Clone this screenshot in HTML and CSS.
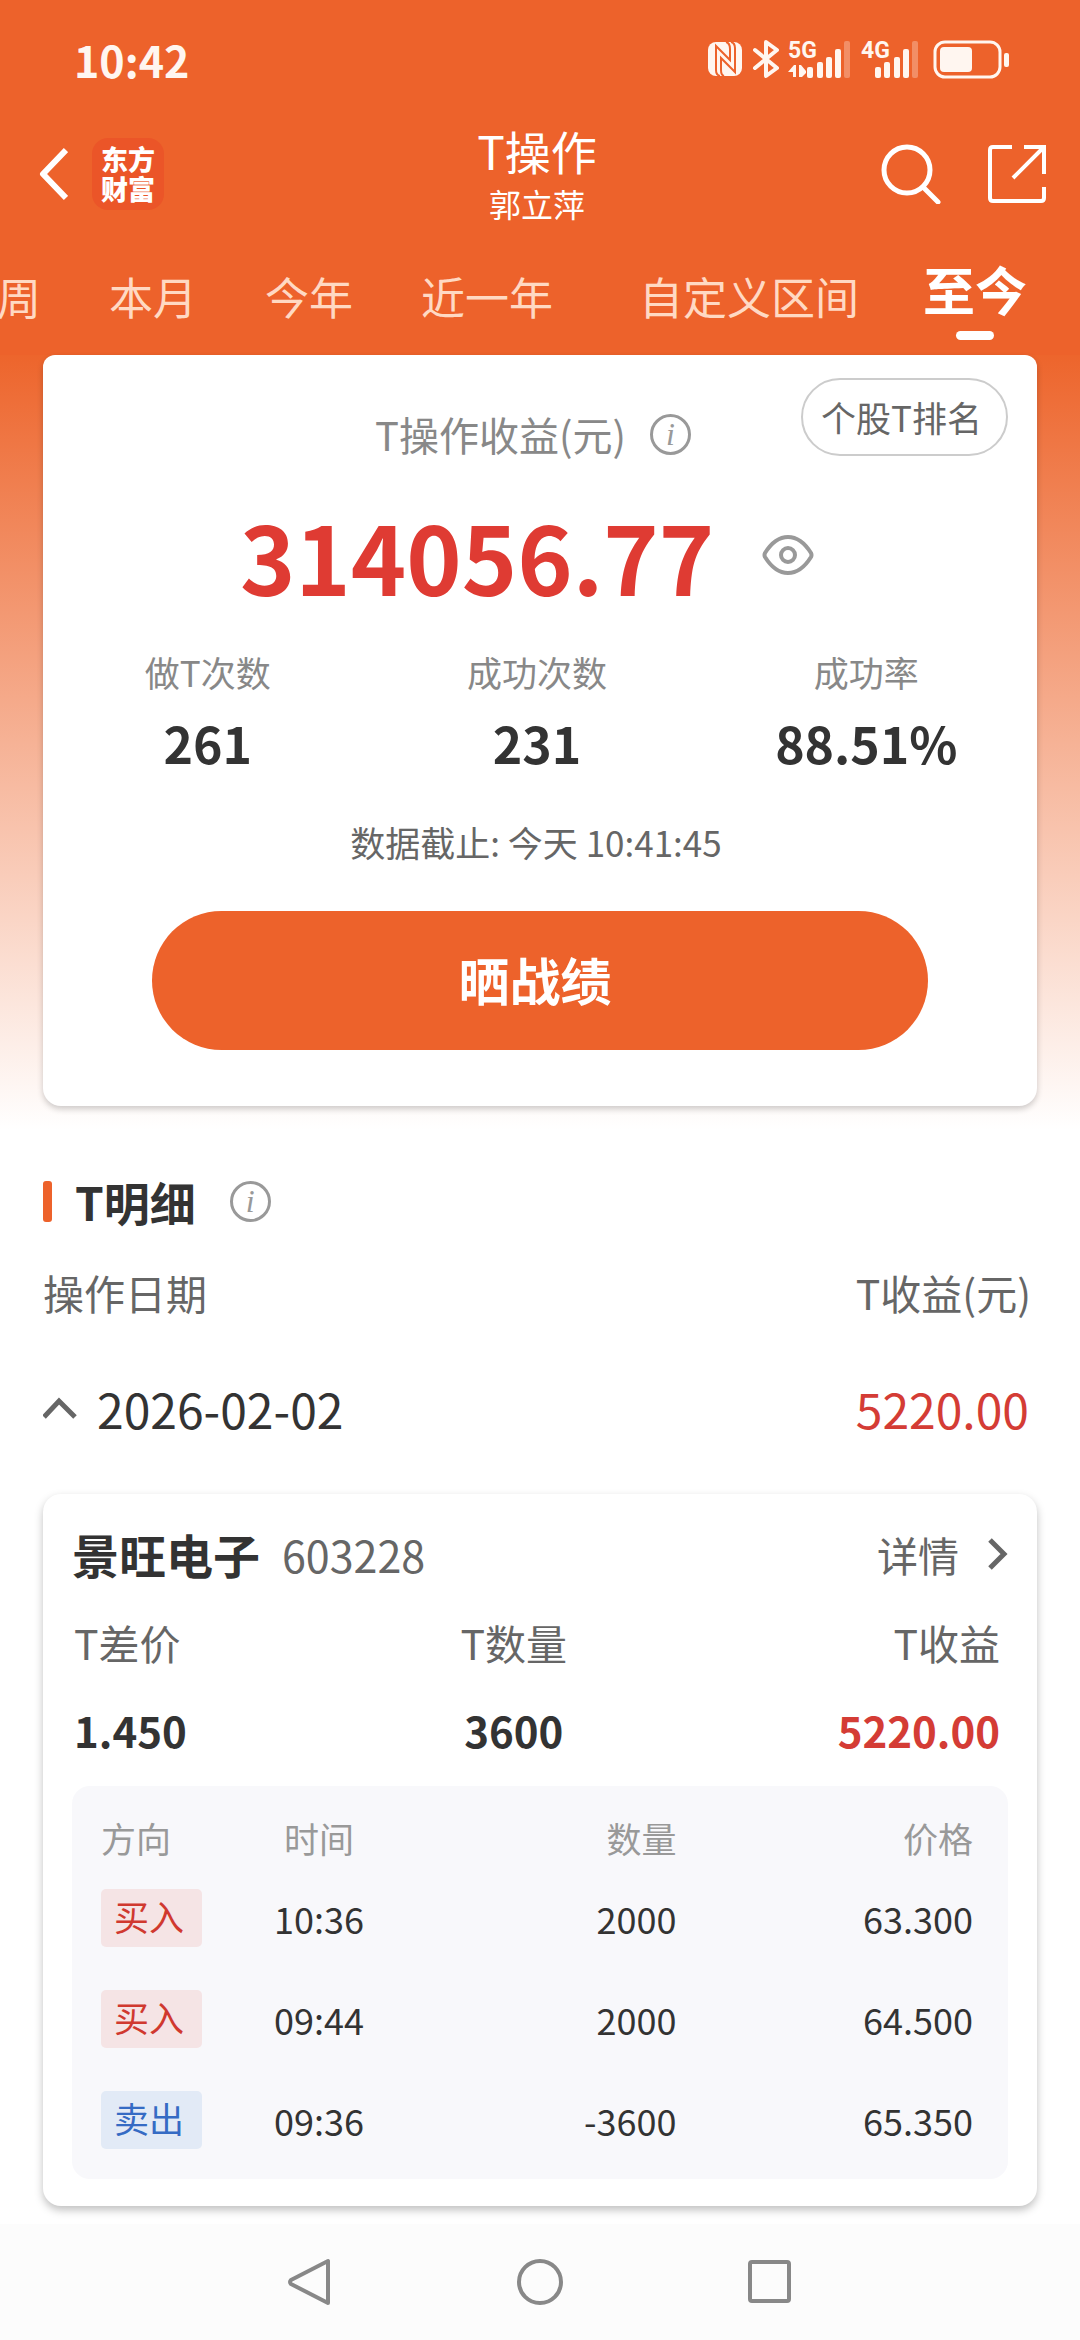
FILE: index.html
```html
<!DOCTYPE html>
<html lang="zh-CN">
<head>
    <meta charset="UTF-8">
    <meta name="viewport" content="width=device-width, initial-scale=1.0">
    <title>T操作</title>
    <link rel="stylesheet" href="styles.css">
</head>
<body>
    <header class="header">
        <div class="status-bar">
            <span class="status-time">10:42</span>
            <svg class="status-icons" width="302" height="56" viewBox="0 -8 302 56" fill="#fff6f0">
                <!-- NFC -->
                <rect x="0" y="3" width="34" height="34" rx="8"/>
                <path d="M12 37Q8 36 8 31V7L22 21V10Q22 4 18 3M23 3Q27 4 27 9V33L13 19V31Q13 36 16 37" fill="none" stroke="#ed622b" stroke-width="2"/>
                <!-- Bluetooth -->
                <path d="M47 11L69 29L58 37V3L69 11L47 29" fill="none" stroke="#fff6f0" stroke-width="4" stroke-linejoin="round" stroke-linecap="round"/>
                <!-- 5G -->
                <text class="network" x="80" y="19">5G</text>
                <path d="M80 33L86 26H88V38H85V33ZM91 26H93L98 32V34L94 38H91Z"/>
                <rect x="99" y="28" width="6" height="11" rx="2"/>
                <rect x="109" y="23" width="6" height="16" rx="2"/>
                <rect x="118" y="18" width="6" height="21" rx="2"/>
                <rect x="127" y="10" width="6" height="29" rx="2"/>
                <rect x="136" y="2" width="6" height="37" rx="2" opacity="0.3"/>
                <!-- 4G -->
                <text class="network" x="153" y="19">4G</text>
                <rect x="167" y="28" width="6" height="11" rx="2"/>
                <rect x="176" y="23" width="6" height="16" rx="2"/>
                <rect x="186" y="18" width="6" height="21" rx="2"/>
                <rect x="195" y="10" width="6" height="29" rx="2"/>
                <rect x="204" y="2" width="6" height="37" rx="2" opacity="0.3"/>
                <!-- Батарея -->
                <rect x="227" y="3" width="65" height="35" rx="10" fill="none" stroke="#fff6f0" stroke-width="3"/>
                <rect x="232" y="8" width="32" height="25" rx="4"/>
                <rect x="296" y="14" width="5" height="14" rx="2"/>
            </svg>
        </div>

        <div class="title-bar">
            <div class="title-left">
                <button type="button" class="icon-button" aria-label="返回">
                    <svg width="30" height="54" viewBox="0 0 30 54" fill="none" stroke="#fff" stroke-width="6"><path d="M28 3L5 27L28 51" stroke-linejoin="round"/></svg>
                </button>
                <a href="#" class="logo">东方<br>财富</a>
            </div>
            <div class="title-center">
                <h1>T操作</h1>
                <p>郭立萍</p>
            </div>
            <div class="title-right">
                <button type="button" class="icon-button" aria-label="搜索">
                    <svg width="60" height="60" viewBox="0 0 60 60" fill="none" stroke="#fff" stroke-width="5" stroke-linecap="round"><circle cx="26" cy="26" r="23"/><path d="M42 43L57 58"/></svg>
                </button>
                <button type="button" class="icon-button" aria-label="分享">
                    <svg width="58" height="60" viewBox="0 0 58 60" fill="none" stroke="#fff" stroke-width="4"><path d="M24 3H5Q2 3 2 6V54Q2 57 5 57H53Q56 57 56 54V43M36 3H56V30M55 4L25 34"/></svg>
                </button>
            </div>
        </div>

        <nav class="tabs">
            <a href="#" class="tab">本周</a>
            <a href="#" class="tab">本月</a>
            <a href="#" class="tab">今年</a>
            <a href="#" class="tab">近一年</a>
            <a href="#" class="tab tab-range">自定义区间</a>
            <a href="#" class="tab active">至今</a>
        </nav>
    </header>

    <main>
        <section class="summary">
            <div class="summary-card">
                <button type="button" class="rank-button">个股T排名</button>
                <div class="summary-title">
                    <span>T操作收益(元)</span>
                    <button type="button" class="info-button" aria-label="说明">i</button>
                </div>
                <div class="summary-total">
                    <strong>314056.77</strong>
                    <button type="button" class="icon-button" aria-label="隐藏金额">
                        <svg width="52" height="40" viewBox="0 0 52 40" fill="none" stroke="#999" stroke-width="4"><path d="M3 18Q13 2 26 2T49 18Q50 20 49 22Q39 38 26 38T3 22Q2 20 3 18Z"/><circle cx="26" cy="20" r="7"/></svg>
                    </button>
                </div>
                <div class="stats">
                    <div class="stat"><span>做T次数</span><strong>261</strong></div>
                    <div class="stat"><span>成功次数</span><strong>231</strong></div>
                    <div class="stat"><span>成功率</span><strong>88.51%</strong></div>
                </div>
                <p class="updated">数据截止: 今天 10:41:45</p>
                <button type="button" class="share-button">晒战绩</button>
            </div>
        </section>

        <section class="details">
            <div class="details-title">
                <h2>T明细</h2>
                <button type="button" class="info-button" aria-label="说明">i</button>
            </div>
            <div class="details-head">
                <span>操作日期</span>
                <span>T收益(元)</span>
            </div>
            <button type="button" class="day-row">
                <svg width="36" height="24" viewBox="0 0 36 24" fill="none" stroke="#666" stroke-width="5"><path d="M1 21L16 5L32 21"/></svg>
                <span class="day-date">2026-02-02</span>
                <span class="day-profit">5220.00</span>
            </button>

            <article class="stock-card">
                <div class="stock-head">
                    <h3>景旺电子</h3>
                    <span class="stock-code">603228</span>
                    <a href="#" class="stock-link">详情
                        <svg width="20" height="32" viewBox="0 0 20 32" fill="none" stroke="#666" stroke-width="5"><path d="M2 2L16 16L2 30"/></svg>
                    </a>
                </div>
                <div class="stock-values">
                    <div><span>T差价</span><strong>1.450</strong></div>
                    <div><span>T数量</span><strong>3600</strong></div>
                    <div><span>T收益</span><strong class="red">5220.00</strong></div>
                </div>
                <div class="trades">
                    <table>
                        <thead>
                            <tr><th>方向</th><th>时间</th><th>数量</th><th>价格</th></tr>
                        </thead>
                        <tbody>
                            <tr><td><span class="badge buy">买入</span></td><td>10:36</td><td>2000</td><td>63.300</td></tr>
                            <tr><td><span class="badge buy">买入</span></td><td>09:44</td><td>2000</td><td>64.500</td></tr>
                            <tr><td><span class="badge sell">卖出</span></td><td>09:36</td><td>-3600</td><td>65.350</td></tr>
                        </tbody>
                    </table>
                </div>
            </article>
        </section>
    </main>

    <footer class="system-nav">
        <button type="button" class="icon-button" aria-label="后退">
            <svg width="48" height="48" viewBox="0 0 48 48" fill="none" stroke="#888" stroke-width="4" stroke-linejoin="round"><path d="M42 3V45L5 26Q3 24 5 22Z"/></svg>
        </button>
        <button type="button" class="icon-button" aria-label="主页">
            <svg width="48" height="48" viewBox="0 0 48 48" fill="none" stroke="#888" stroke-width="4"><circle cx="24" cy="24" r="21"/></svg>
        </button>
        <button type="button" class="icon-button" aria-label="最近任务">
            <svg width="48" height="48" viewBox="0 0 48 48" fill="none" stroke="#888" stroke-width="4"><rect x="4" y="4" width="39" height="39" rx="2"/></svg>
        </button>
    </footer>
</body>
</html>
```
FILE: styles.css
```css
* {
    box-sizing: border-box;
}

body {
    margin: 0;
    min-height: 100vh;
    display: flex;
    flex-direction: column;
    font-family: "Noto Sans CJK SC", sans-serif;
    font-size: 40px;
    color: #333;
    background: #fff;
}

h1, h2, h3, p {
    margin: 0;
}

button {
    padding: 0;
    border: none;
    background: none;
    font-family: inherit;
    color: inherit;
    cursor: pointer;
}

a {
    color: inherit;
    text-decoration: none;
}

svg {
    display: block;
    flex: none;
}

.red {
    color: #d43c35;
}

/* Шапка */
.header {
    background: #ed622b;
    color: #fff;
}

.status-bar {
    display: flex;
    justify-content: space-between;
    align-items: center;
    height: 118px;
    padding: 0 70px 0 74px;
}

.status-time {
    font-size: 43px;
    font-weight: 700;
    color: #fff6f0;
}

.network {
    font-family: Roboto, sans-serif;
    font-size: 23px;
    font-weight: 700;
}

.title-bar {
    display: grid;
    grid-template-columns: 1fr auto 1fr;
    align-items: center;
    height: 112px;
    padding: 0 34px 0 38px;
}

.title-left {
    display: flex;
    align-items: center;
    gap: 24px;
}

.logo {
    width: 72px;
    height: 72px;
    padding-top: 6px;
    border-radius: 16px;
    background: #eb5528;
    font-size: 27px;
    font-weight: 900;
    line-height: 30px;
    text-align: center;
}

.title-center {
    padding-right: 10px;
    text-align: center;
}

.title-center h1 {
    font-size: 46px;
    font-weight: 400;
    line-height: 58px;
}

.title-center p {
    font-size: 32px;
    line-height: 48px;
}

.title-right {
    display: flex;
    justify-content: flex-end;
    gap: 47px;
}

.tabs {
    display: flex;
    justify-content: flex-end;
    gap: 68px;
    height: 125px;
    padding-right: 53px;
    overflow: hidden;
}

.tab {
    flex: none;
    font-size: 44px;
    line-height: 132px;
    color: #ffd9c3;
}

.tab-range {
    margin: 0 -4px 0 18px;
}

.tab.active {
    display: flex;
    flex-direction: column;
    align-items: center;
    gap: 9px;
    padding-top: 26px;
    font-size: 52px;
    font-weight: 700;
    line-height: 66px;
    color: #fff;
}

.tab.active::after {
    content: "";
    width: 38px;
    height: 9px;
    border-radius: 5px;
    background: #fff;
}

/* Итоги */
.summary {
    padding: 0 43px 24px;
    background: linear-gradient(#ed652c, #fff);
}

.summary-card {
    position: relative;
    display: flex;
    flex-direction: column;
    align-items: center;
    padding: 50px 0 56px;
    border-radius: 12px 12px 18px 18px;
    background: #fff;
    box-shadow: 0 3px 6px rgba(0, 0, 0, 0.2);
}

.rank-button {
    position: absolute;
    top: 23px;
    right: 29px;
    height: 78px;
    padding: 0 24px 2px 18px;
    border: 2px solid #ccc;
    border-radius: 39px;
    font-size: 35px;
    color: #666;
}

.summary-title {
    display: flex;
    align-items: center;
    gap: 24px;
    padding-right: 14px;
    line-height: 58px;
    color: #888;
}

.info-button {
    width: 41px;
    height: 41px;
    border: 3px solid #999;
    border-radius: 50%;
    font-family: "Liberation Serif", serif;
    font-size: 32px;
    font-style: italic;
    line-height: 32px;
    color: #999;
}

.summary-total {
    display: flex;
    align-items: center;
    gap: 48px;
    line-height: 120px;
    padding: 32px 26px 0 0;
}

.summary-total strong {
    font-size: 94px;
    color: #df3b33;
}

.stats {
    display: grid;
    grid-template-columns: 1fr 1fr 1fr;
    width: 100%;
    padding: 32px 6px 0 0;
}

.stat {
    display: flex;
    flex-direction: column;
    align-items: center;
}

.stat span {
    font-size: 35px;
    line-height: 50px;
    color: #888;
}

.stat strong {
    font-size: 50px;
    line-height: 90px;
}

.updated {
    padding: 30px 8px 0 0;
    font-size: 35px;
    line-height: 50px;
    color: #666;
}

.share-button {
    width: 78%;
    height: 139px;
    margin-top: 44px;
    padding: 0 10px 4px 0;
    border-radius: 70px;
    background: #ed622b;
    font-size: 51px;
    font-weight: 700;
    color: #fff;
}

/* Детализация */
.details {
    padding: 40px 43px 18px;
}

.details-title {
    display: flex;
    align-items: center;
    gap: 34px;
    height: 62px;
}

.details-title h2 {
    display: flex;
    align-items: center;
    gap: 23px;
    font-size: 46px;
    line-height: 62px;
}

.details-title h2::before {
    content: "";
    width: 9px;
    height: 41px;
    border-radius: 3px;
    background: #ed622b;
}

.details-head {
    display: flex;
    justify-content: space-between;
    padding: 30px 6px 0 0;
    font-size: 41px;
    line-height: 60px;
    color: #666;
}

.day-row {
    display: flex;
    align-items: center;
    width: 100%;
    height: 172px;
    padding: 0 8px 0 0;
    font-size: 48px;
}

.day-date {
    margin: 0 auto 0 18px;
}

.day-profit {
    color: #d43c35;
}

.stock-card {
    padding: 28px 29px 27px;
    border-radius: 18px;
    background: #fff;
    box-shadow: 0 4px 8px rgba(0, 0, 0, 0.25);
}

.stock-head {
    display: flex;
    align-items: center;
    line-height: 64px;
}

.stock-head h3 {
    font-size: 47px;
}

.stock-code {
    margin-left: 22px;
    font-size: 43px;
    color: #666;
}

.stock-link {
    display: flex;
    align-items: center;
    gap: 29px;
    margin-left: auto;
    font-size: 41px;
    color: #666;
}

.stock-values {
    display: grid;
    grid-template-columns: 31% 33% 36%;
    padding: 12px 8px 0 2px;
}

.stock-values div {
    display: flex;
    flex-direction: column;
    line-height: 88px;
}

.stock-values div:nth-child(2) {
    align-items: center;
}

.stock-values div:nth-child(3) {
    align-items: flex-end;
}

.stock-values span {
    font-size: 41px;
    color: #666;
}

.stock-values strong {
    font-size: 42px;
}

.trades {
    margin-top: 12px;
    padding: 20px 35px 8px 29px;
    border-radius: 18px;
    background: #f8f8fb;
}

.trades table {
    width: 100%;
    table-layout: fixed;
    border-collapse: collapse;
    font-size: 36px;
}

.trades th,
.trades td {
    height: 101px;
    padding: 0;
    text-align: right;
}

.trades th {
    height: 62px;
    font-size: 35px;
    font-weight: 400;
    color: #999;
}

.trades td {
    padding-bottom: 2px;
}

.trades th:nth-child(1),
.trades td:nth-child(1) {
    width: 19%;
    text-align: left;
}

.trades th:nth-child(2),
.trades td:nth-child(2) {
    width: 12%;
    text-align: center;
}

.trades th:nth-child(3) {
    width: 35%;
}

.badge {
    display: block;
    width: 101px;
    height: 58px;
    padding-left: 13px;
    border-radius: 5px;
    font-size: 35px;
    line-height: 54px;
}

.badge.buy {
    background: #f5e4e5;
    color: #d0392f;
}

.badge.sell {
    background: #e2eaf6;
    color: #356bc4;
}

/* Системная навигация */
.system-nav {
    display: flex;
    justify-content: center;
    gap: 182px;
    margin-top: auto;
    padding: 34px 0;
    background: #fcfcfc;
}
```
